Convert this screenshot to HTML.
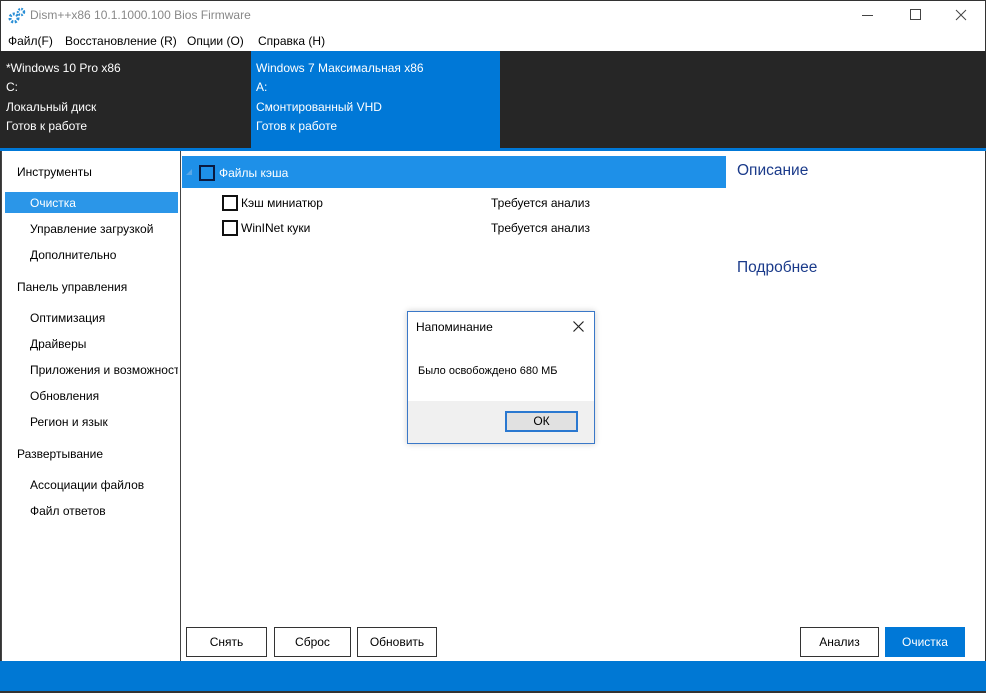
<!DOCTYPE html>
<html><head><meta charset="utf-8"><style>
*{margin:0;padding:0;box-sizing:border-box}
body{width:986px;height:693px;position:relative;overflow:hidden;background:#fff;font-family:"Segoe UI","Liberation Sans","DejaVu Sans",sans-serif;font-size:12px;color:#000}
.a{position:absolute;white-space:nowrap}
.btn{position:absolute;top:627px;height:30px;border:1px solid #333;background:#fff;text-align:center;line-height:28px;font-size:12px}
.cb{position:absolute;width:16px;height:16px;border:2px solid #111}
</style></head><body>
<div class="a" style="left:0;top:0;width:986px;height:693px;border:1px solid #333"></div>
<svg class="a" style="left:8px;top:7px" width="18" height="17" viewBox="0 0 18 17"><circle cx="6" cy="11" r="4" fill="none" stroke="#2a8fd6" stroke-width="3" stroke-dasharray="2 1.5"/><circle cx="13" cy="5" r="3" fill="none" stroke="#2a8fd6" stroke-width="2.4" stroke-dasharray="1.6 1.2"/></svg>
<div class="a" style="left:30px;top:8px;color:#888;font-size:12px">Dism++x86 10.1.1000.100 Bios Firmware</div>
<div class="a" style="left:862px;top:15px;width:11px;border-top:1px solid #444"></div>
<div class="a" style="left:910px;top:9px;width:11px;height:11px;border:1px solid #444"></div>
<svg class="a" style="left:955px;top:9px" width="12" height="12"><path d="M1 1L11 11M11 1L1 11" stroke="#444" stroke-width="1"/></svg>
<div class="a" style="left:8px;top:34px">Файл(F)</div>
<div class="a" style="left:65px;top:34px">Восстановление (R)</div>
<div class="a" style="left:187px;top:34px">Опции (O)</div>
<div class="a" style="left:258px;top:34px">Справка (H)</div>
<div class="a" style="left:0;top:51px;width:986px;height:97px;background:#262626"></div>
<div class="a" style="left:251px;top:51px;width:249px;height:97px;background:#0078d7"></div>
<div class="a" style="left:0;top:148px;width:986px;height:3px;background:#0078d7"></div>
<div class="a" style="left:6px;top:59px;color:#fff;line-height:19.3px">*Windows 10 Pro x86<br>C:<br>Локальный диск<br>Готов к работе</div>
<div class="a" style="left:256px;top:59px;color:#fff;line-height:19.3px">Windows 7 Максимальная x86<br>A:<br>Смонтированный VHD<br>Готов к работе</div>
<div class="a" style="left:1px;top:151px;width:180px;height:510px;border-right:1px solid #444;border-left:1px solid #444"></div>
<div class="a" style="left:17px;top:165px">Инструменты</div>
<div class="a" style="left:5px;top:192px;width:173px;height:21px;background:#2b96e8"></div>
<div class="a" style="left:30px;top:196px;color:#fff">Очистка</div>
<div class="a" style="left:30px;top:222px">Управление загрузкой</div>
<div class="a" style="left:30px;top:248px">Дополнительно</div>
<div class="a" style="left:17px;top:280px">Панель управления</div>
<div class="a" style="left:30px;top:311px">Оптимизация</div>
<div class="a" style="left:30px;top:337px">Драйверы</div>
<div class="a" style="left:30px;top:363px;width:148px;overflow:hidden">Приложения и возможности</div>
<div class="a" style="left:30px;top:389px">Обновления</div>
<div class="a" style="left:30px;top:415px">Регион и язык</div>
<div class="a" style="left:17px;top:447px">Развертывание</div>
<div class="a" style="left:30px;top:478px">Ассоциации файлов</div>
<div class="a" style="left:30px;top:504px">Файл ответов</div>
<div class="a" style="left:182px;top:156px;width:544px;height:32px;background:#1e90e8"></div>
<div class="a" style="left:186px;top:169px;width:0;height:0;border-left:6px solid transparent;border-bottom:6px solid #5aa8e8"></div>
<div class="cb" style="left:199px;top:165px;border-color:#0a1a40"></div>
<div class="a" style="left:219px;top:166px;color:#fff">Файлы кэша</div>
<div class="cb" style="left:222px;top:195px"></div>
<div class="a" style="left:241px;top:196px">Кэш миниатюр</div>
<div class="a" style="left:491px;top:196px">Требуется анализ</div>
<div class="cb" style="left:222px;top:220px"></div>
<div class="a" style="left:241px;top:221px">WinINet куки</div>
<div class="a" style="left:491px;top:221px">Требуется анализ</div>
<div class="a" style="left:737px;top:162px;font-size:15.5px;color:#1a3a8a">Описание</div>
<div class="a" style="left:737px;top:259px;font-size:15.5px;color:#1a3a8a">Подробнее</div>
<div class="a" style="left:407px;top:311px;width:188px;height:133px;border:1px solid #3a78c8;background:#fff;box-shadow:0 0 6px rgba(0,0,0,.2)"></div>
<div class="a" style="left:408px;top:401px;width:186px;height:42px;background:#f0f0f0"></div>
<div class="a" style="left:416px;top:320px">Напоминание</div>
<svg class="a" style="left:573px;top:321px" width="11" height="11"><path d="M0.5 0.5L10.5 10.5M10.5 0.5L0.5 10.5" stroke="#222" stroke-width="1.2"/></svg>
<div class="a" style="left:418px;top:365px;font-size:11px">Было освобождено 680 МБ</div>
<div class="a" style="left:505px;top:411px;width:73px;height:21px;border:2px solid #2a78d0;background:#e1e1e1;text-align:center;line-height:17px">ОК</div>
<div class="btn" style="left:186px;width:81px">Снять</div>
<div class="btn" style="left:274px;width:77px">Сброс</div>
<div class="btn" style="left:357px;width:80px">Обновить</div>
<div class="btn" style="left:800px;width:79px">Анализ</div>
<div class="btn" style="left:885px;width:80px;background:#0078d7;border-color:#0078d7;color:#fff">Очистка</div>
<div class="a" style="left:0;top:661px;width:986px;height:30px;background:#0078d4"></div>
<div class="a" style="left:0;top:691px;width:986px;height:2px;background:#333"></div>
</body></html>
